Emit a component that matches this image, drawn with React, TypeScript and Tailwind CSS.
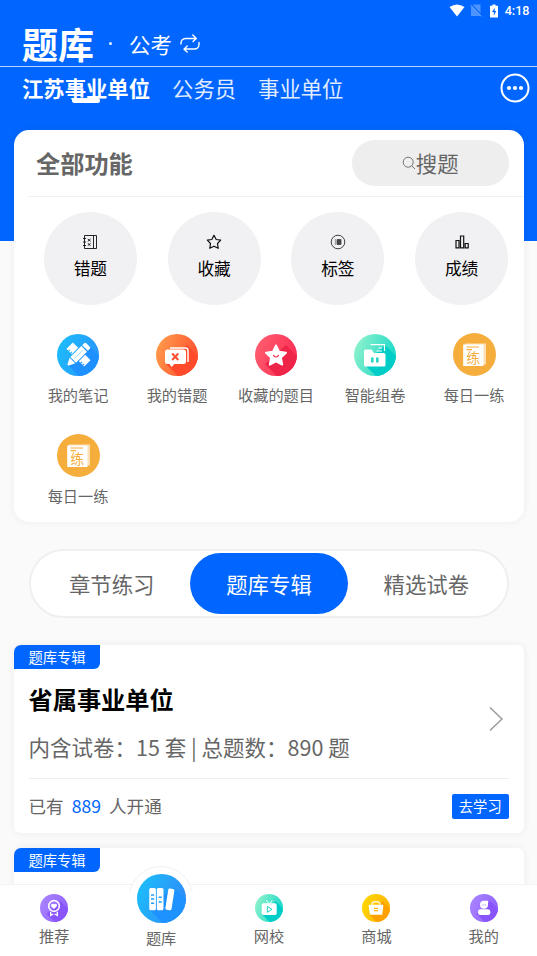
import type { ReactNode } from 'react';

type IconProps = { id: string; from: string; to: string; size: string; shadow?: string; children: ReactNode };

// Round gradient badge on a 42 unit grid, the glyph goes in as children
const Badge = ({ id, from, to, size, shadow, children }: IconProps) => (
  <svg viewBox="0 0 42 42" className={size}>
    <defs>
      <linearGradient id={`${id}-bg`} x1="0" y1="0.3" x2="1" y2="0.7">
        <stop offset="0" stopColor={from} />
        <stop offset="1" stopColor={to} />
      </linearGradient>
      <clipPath id={`${id}-clip`}>
        <circle cx="21" cy="21" r="21" />
      </clipPath>
    </defs>
    <circle cx="21" cy="21" r="21" fill={`url(#${id}-bg)`} />
    {shadow && <path d="M10 30 L31 11 L46 26 V46 H26 Z" fill={shadow} clipPath={`url(#${id}-clip)`} />}
    {children}
  </svg>
);

const NoteIcon = () => (
  <Badge id="note" from="#1cbcfb" to="#2a93fb" shadow="#1e90ff" size="size-[42px]">
    <g transform="translate(21.5 20.5) rotate(45)" fill="#fff">
      <path d="M-12.5 -4.5 H-5 V4.5 H-6 v-1.8 h-1 v1.8 h-1.8 v-1.8 h-1 v1.8 H-12.5z" />
      <path d="M5 -4.5 H12.5 V4.5 H11 v-1.8 h-1 v1.8 h-1.8 v-1.8 h-1 v1.8 H5z" />
      <path d="M-4 -8 H4 V7.5 H-4z M-4 -9.2 V-12 a1.5 1.5 0 0 1 1.5 -1.5 H2.5 A1.5 1.5 0 0 1 4 -12 V-9.2z M-4 8.5 H4 L0.8 15 h-1.6z" />
      <path d="M0 -6 V6" stroke="#7cc8fd" strokeWidth="0.6" />
    </g>
  </Badge>
);

const WrongIcon = () => (
  <Badge id="wrong" from="#ff9a4b" to="#ff4b2e" shadow="#ff4b2b" size="size-[42px]">
    <path d="M14 14 H29.5 a2.5 2.5 0 0 1 2.5 2.5 V28" fill="none" stroke="#fff" strokeWidth="1.5" />
    <path d="M11.5 15.5 H27.5 a2.5 2.5 0 0 1 2.5 2.5 V27.5 a2.5 2.5 0 0 1 -2.5 2.5 H18.5 L15.5 33 L13.5 30 H11.5 A2.5 2.5 0 0 1 9 27.5 V18 a2.5 2.5 0 0 1 2.5 -2.5z" fill="#fff" />
    <path d="M16.2 19.5 L22.3 26 M22.3 19.5 L16.2 26" stroke="#f9512f" strokeWidth="2" />
  </Badge>
);

const StarIcon = () => (
  <Badge id="star" from="#ff5c6e" to="#fb2b53" shadow="#ee2449" size="size-[42px]">
    <path d="M21 11.5 L24 17.8 L31 18.7 L25.9 23.5 L27.2 30.6 L21 27.3 L14.8 30.6 L16.1 23.5 L11 18.7 L18 17.8Z" fill="#fff" stroke="#fff" strokeWidth="2" strokeLinejoin="round" />
    <path d="M18.5 21.5 q2.5 3 5 0" fill="none" stroke="#f43355" strokeWidth="1.2" strokeLinecap="round" />
  </Badge>
);

const FolderIcon = () => (
  <Badge id="folder" from="#8ef2cb" to="#12d5c9" shadow="#00cdc8" size="size-[42px]">
    <path d="M16.5 10.7 H30.5 V17" fill="none" stroke="#fff" strokeWidth="1.2" />
    <path d="M24.5 14 H28 M22.5 17 H28" stroke="#fff" strokeWidth="1" />
    <path d="M11.5 15.5 H17.5 L20 19 H30 a1.5 1.5 0 0 1 1.5 1.5 V31 a1.5 1.5 0 0 1 -1.5 1.5 H11.5 A1.5 1.5 0 0 1 10 31 V17 a1.5 1.5 0 0 1 1.5 -1.5z" fill="#fff" />
    <path d="M18.3 24.5 V27.5 M23.3 24.5 V27.5" stroke="#25d8c8" strokeWidth="2.6" strokeLinecap="round" />
  </Badge>
);

const DailyIcon = () => (
  <svg viewBox="0 0 43 43" className="size-[43px]">
    <circle cx="21.5" cy="21.5" r="21.5" fill="#f5ad3c" />
    <path d="M12 10.5 H33 V31.5 H12z" fill="#fce0b3" />
    <path d="M10.2 11.5 H30.5 V33 H10.2z" fill="#fff" />
    <path d="M13.5 14 H26 M13.5 16.7 H19" stroke="#f5ad3c" strokeWidth="1.2" />
    <text x="13.5" y="30" fontSize="13.5" fill="#f5ad3c">练</text>
  </svg>
);

const RecommendIcon = () => (
  <Badge id="rec" from="#a883ff" to="#8f5ffd" shadow="#8a54fb" size="size-7">
    <circle cx="21" cy="18" r="8" fill="none" stroke="#fff" strokeWidth="2.4" />
    <path d="M21 22.5 L16.8 18.3 a2.3 2.3 0 0 1 4.2 -2.5 a2.3 2.3 0 0 1 4.2 2.5z" fill="#fff" />
    <path d="M16 26.5 V32 L20 30 M26 26.5 V32 L22 30" fill="none" stroke="#fff" strokeWidth="2" />
  </Badge>
);

const BooksIcon = () => (
  <Badge id="books" from="#1cbdfb" to="#3089f7" shadow="#1e93ff" size="size-[49px]">
    <rect x="10.5" y="12" width="5.7" height="19" rx="1.3" fill="#fff" />
    <rect x="17" y="12" width="5.7" height="19" rx="1.3" fill="#fff" />
    <rect x="25.5" y="12.5" width="5.3" height="18.5" rx="1.3" fill="#fff" transform="rotate(9 28 22)" />
    <path d="M12 18 h2.7 M12 21.5 h2.7 M12 25 h2.7 M18.5 20 h2.7 M18.5 24 h2.7" stroke="#239dfb" strokeWidth="1.3" />
  </Badge>
);

const SchoolIcon = () => (
  <Badge id="school" from="#8ef2cb" to="#12d5c9" shadow="#00cdc8" size="size-7">
    <path d="M17 9.5 L20.5 14 M26 9.5 L22.5 14" stroke="#fff" strokeWidth="1.5" />
    <rect x="10" y="14" width="22.5" height="17.5" rx="2.5" fill="#fff" />
    <path d="M18.5 18.5 L25.5 23 L18.5 27.5Z" fill="none" stroke="#19d3c8" strokeWidth="1.5" />
  </Badge>
);

const ShopIcon = () => (
  <Badge id="shop" from="#ffd800" to="#ffae00" shadow="#ffa200" size="size-7">
    <path d="M15 17 V15.5 a6 4 0 0 1 12 0 V17" fill="none" stroke="#fff" strokeWidth="1.7" />
    <path d="M11.5 16 H30.5 a1.5 1.5 0 0 1 1.5 1.7 L30.5 29.5 a2 2 0 0 1 -2 1.8 H13.5 a2 2 0 0 1 -2 -1.8 L10 17.7 A1.5 1.5 0 0 1 11.5 16z" fill="#fff" />
    <path d="M18 21.5 h6 M18 25 h6" stroke="#ffb400" strokeWidth="1.7" />
  </Badge>
);

const MineIcon = () => (
  <Badge id="mine" from="#a883ff" to="#8f5ffd" shadow="#8a54fb" size="size-7">
    <path d="M21.5 10 H27 V16 A6 6 0 1 1 21 10z" fill="#fff" />
    <path d="M19.5 15.5 v1.8 M23 15.5 v1.8" stroke="#9b70fd" strokeWidth="1.3" />
    <rect x="12" y="23" width="18.5" height="8.5" rx="4.25" fill="#fff" />
  </Badge>
);

const quick = [
  {
    label: '错题',
    icon: (
      <g>
        <path d="M2.5 1.5 H14.5 V14.5 H2.5z M11.5 1.5 V14.5" />
        <path d="M1 4.5 H4 M1 8 H4 M1 11.5 H4" />
        <path d="M5.8 5 L8.6 7.3 M8.6 5 L5.8 7.3 M5.8 9.3 L8.6 11.6 M8.6 9.3 L5.8 11.6" />
      </g>
    ),
  },
  {
    label: '收藏',
    icon: <path strokeWidth="1.2" strokeLinejoin="round" d="M8 1.3 L10.2 5.5 L14.7 6.2 L11.5 9.5 L12.2 14.3 L8 12.2 L3.8 14.3 L4.5 9.5 L1.3 6.2 L5.8 5.5Z" />,
  },
  {
    label: '标签',
    icon: (
      <g strokeWidth="0.8">
        <circle cx="8" cy="8" r="6.8" />
        <path d="M7 5.5 H11 V10.5 H7z" fill="#444" stroke="#444" />
        <path d="M5.3 5 V11" stroke="#777" />
      </g>
    ),
  },
  {
    label: '成绩',
    icon: <path strokeWidth="1.2" d="M2 6.5 H5 V13.8 H2z M6.5 2 H9.7 V13.8 H6.5z M11.2 9.5 H14.2 V13.8 H11.2z" />,
  },
];

const features = [
  { label: '我的笔记', icon: <NoteIcon /> },
  { label: '我的错题', icon: <WrongIcon /> },
  { label: '收藏的题目', icon: <StarIcon /> },
  { label: '智能组卷', icon: <FolderIcon /> },
  { label: '每日一练', icon: <DailyIcon /> },
  { label: '每日一练', icon: <DailyIcon /> },
];

const tabs = [
  { label: '推荐', icon: <RecommendIcon /> },
  { label: '题库', icon: <BooksIcon />, active: true },
  { label: '网校', icon: <SchoolIcon /> },
  { label: '商城', icon: <ShopIcon /> },
  { label: '我的', icon: <MineIcon /> },
];

const StatusBar = () => (
  <div className="flex h-[21px] items-center justify-end pr-[7.5px] text-white">
    <svg viewBox="0 0 16 13" className="h-[13px] w-4" fill="#fff">
      <path d="M0.5 3 Q8 -2 15.5 3 L8 12.5Z" />
    </svg>
    <svg viewBox="0 0 12 13" className="ml-[5px] h-[13px] w-3">
      <path d="M3.5 0.5 H10.5 V12 H1 V3z" fill="#4d93ff" />
      <path d="M1.5 0.5 L12 11.5" stroke="#0066ff" strokeWidth="1.2" />
      <path d="M0.5 1 L11.5 12.5" stroke="#6ba5ff" strokeWidth="1" />
    </svg>
    <svg viewBox="0 0 8 14" className="ml-[8px] h-[14px] w-2">
      <path d="M2.5 0.5 H5.5 V1.7 H8 V13.5 H0 V1.7 H2.5z" fill="#fff" />
      <path d="M4.7 3.7 L2 8 H3.8 V11.5 L6.3 7 H4.7z" fill="#0066ff" />
    </svg>
    <span className="ml-[7px] pt-[2px] font-[Roboto] text-[12.6px] font-medium leading-none">4:18</span>
  </div>
);

const Tag = () => (
  <div className="flex h-[23.5px] w-[86px] items-center justify-center rounded-br-[6px] rounded-tl-[7px] bg-[#0066ff] text-[14.3px] leading-none text-white">
    题库专辑
  </div>
);

const App = () => {
  return (
    <div className="flex h-[956px] w-[537px] flex-col overflow-hidden bg-[linear-gradient(#0066ff_241px,#fafafa_241px)] font-['Noto_Sans_CJK_SC',sans-serif] text-[#666]">
      <div className="min-h-0 flex-1 overflow-hidden">
        <StatusBar />
        <header className="flex h-[46px] items-center border-b border-[#b9d3ff] pl-[22px] text-white">
          <h1 className="pb-px text-[36px] font-bold leading-none">题库</h1>
          <span className="ml-[15px] mr-[17px] size-[3px] rounded-full bg-white/90" />
          <span className="text-[21.4px] leading-none">公考</span>
          <svg viewBox="0 0 20 20" className="ml-[8px] size-5" fill="none" stroke="#fff" strokeWidth="1.4" strokeLinecap="round" strokeLinejoin="round">
            <path d="M1 10 V9 a4.5 4.5 0 0 1 4.5 -4.5 H16 M12.8 1 L16.3 4.5 L13 7.5" />
            <path d="M19 8.5 V10.5 a4.5 4.5 0 0 1 -4.5 4.5 H4 M7.2 12 L4 15.2 L7.2 18" />
          </svg>
        </header>
        <nav className="flex h-[41px] items-center gap-[22px] pl-[22px] pr-[7.5px] text-[21.35px] leading-none text-white">
          <span className="relative font-bold">
            江苏事业单位
            <span className="absolute -bottom-[5px] left-[50px] h-[5px] w-7 rounded-full bg-white" />
          </span>
          <span className="text-[#e1ecff]">公务员</span>
          <span className="text-[#e1ecff]">事业单位</span>
          <svg viewBox="0 0 30 30" className="ml-auto size-[30px]">
            <circle cx="15" cy="15" r="13.5" fill="none" stroke="#fff" strokeWidth="2" />
            <circle cx="9" cy="15" r="2.1" fill="#fff" />
            <circle cx="15" cy="15" r="2.1" fill="#fff" />
            <circle cx="21" cy="15" r="2.1" fill="#fff" />
          </svg>
        </nav>

        <main className="mt-[22px] pl-[14px] pr-[13.5px]">
          <section className="h-[391.5px] rounded-[15px] bg-white pl-[14.5px] shadow-[0_0_8px_rgba(0,0,0,0.06)]">
            <div className="flex h-[67px] items-center justify-between border-b border-[#f0f0f0] pl-[7.5px] pr-[14.5px]">
              <h2 className="text-[24.2px] font-bold leading-none">全部功能</h2>
              <div className="flex h-[46px] w-[157.5px] items-center justify-center rounded-full bg-[#eee] text-[21.4px] leading-none">
                <svg viewBox="0 0 14 14" className="size-[14px]" fill="none" stroke="#666" strokeWidth="0.9">
                  <circle cx="6.2" cy="6.2" r="5" />
                  <path d="M9.8 9.8 L13 13" />
                </svg>
                搜题
              </div>
            </div>
            <div className="grid grid-cols-4 pt-[14.5px]">
              {quick.map((item) => (
                <div key={item.label} className="mx-auto flex size-[93px] flex-col items-center rounded-full bg-[#f1f1f3] pt-[22.5px] text-black">
                  <svg viewBox="0 0 16 16" className="size-4" fill="none" stroke="#111" strokeWidth="0.9">
                    {item.icon}
                  </svg>
                  <span className="mt-[10px] text-[16.7px] leading-none">{item.label}</span>
                </div>
              ))}
            </div>
            <div className="grid grid-cols-5 pt-[28.5px]">
              {features.map((item, i) => (
                <div key={i} className="flex h-[101px] flex-col items-center">
                  <div className="flex h-[43px] items-center">{item.icon}</div>
                  <span className="mt-[10.5px] text-[15.2px] leading-none">{item.label}</span>
                </div>
              ))}
            </div>
          </section>

          <div className="mx-[14.5px] mt-[27.5px] grid h-[69px] grid-cols-3 items-center rounded-full border-2 border-[#efefef] bg-white pl-[2.5px] pr-[2px] text-center text-[21.4px] leading-none">
            <span>章节练习</span>
            <span className="flex h-[61px] items-center justify-center rounded-full bg-[#0066ff] text-white">题库专辑</span>
            <span>精选试卷</span>
          </div>

          <section className="mt-[27px] h-[188px] rounded-[7px] bg-white shadow-[0_0_8px_rgba(0,0,0,0.06)]">
            <Tag />
            <div className="mx-[14.5px] flex h-[110px] items-center justify-between border-b border-[#eee]">
              <div>
                <h3 className="text-[24.2px] font-bold leading-[48px] text-black">省属事业单位</h3>
                <p className="text-[21.5px] leading-[48px]">内含试卷：15 套 | 总题数：890 题</p>
              </div>
              <svg viewBox="0 0 14 26" className="mb-[9px] mr-[6px] h-[26px] w-[14px]" fill="none" stroke="#999" strokeWidth="1.5">
                <path d="M1 1.5 L13 13 L1 24.5" />
              </svg>
            </div>
            <div className="mx-[14.5px] flex h-[55.5px] items-center justify-between">
              <p className="text-[17.6px] leading-none">
                已有<span className="mx-[8px] text-[#0066ff]">889</span>人开通
              </p>
              <button className="h-[25px] w-[57.5px] rounded-[2px] bg-[#0066ff] text-[14.3px] leading-none text-white">去学习</button>
            </div>
          </section>

          <section className="mt-[15px] h-[188px] rounded-[7px] bg-white shadow-[0_0_8px_rgba(0,0,0,0.06)]">
            <Tag />
          </section>
        </main>
      </div>

      <footer className="relative grid h-[72px] shrink-0 grid-cols-5 border-t border-[#f2f2f2] bg-white text-[15.2px] leading-none">
        {/* raised bump behind the active tab */}
        <svg viewBox="0 0 66 26" className="absolute -top-[19px] left-[128px] h-[26px] w-[66px]">
          <circle cx="33" cy="32.5" r="32" fill="#fff" stroke="#f1f1f1" />
        </svg>
        {tabs.map((tab) =>
          tab.active ? (
            <div key={tab.label} className="relative -mt-[11px] flex flex-col items-center">
              {tab.icon}
              <span className="mt-[7px]">{tab.label}</span>
            </div>
          ) : (
            <div key={tab.label} className="flex flex-col items-center pl-px pt-[9px]">
              {tab.icon}
              <span className="mt-[6px]">{tab.label}</span>
            </div>
          ),
        )}
      </footer>
    </div>
  );
};

export default App;
